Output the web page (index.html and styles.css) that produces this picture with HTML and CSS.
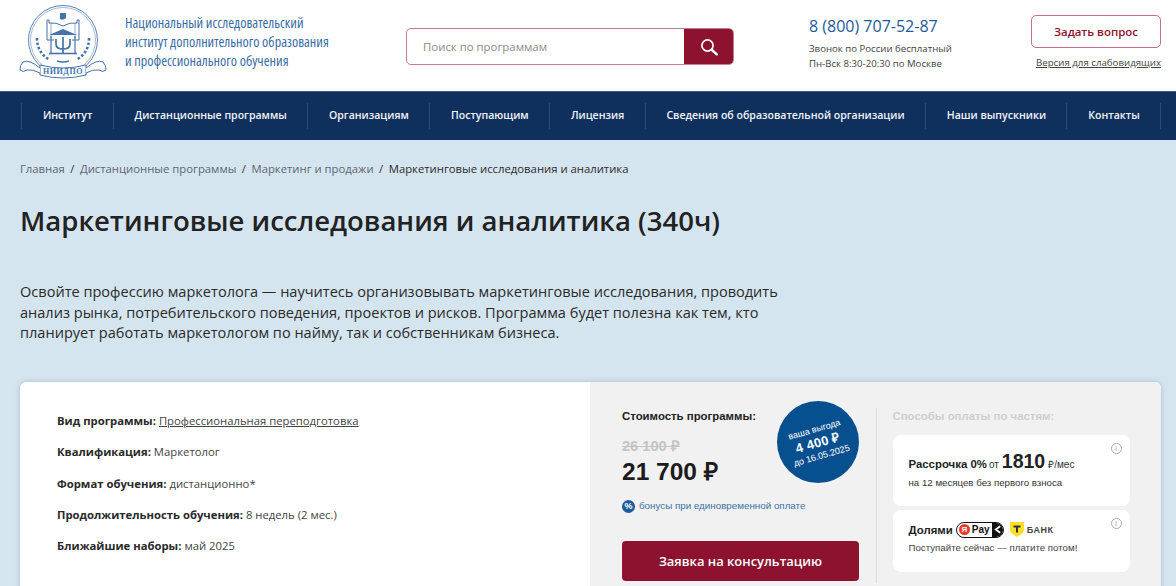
FILE: index.html
```html
<!DOCTYPE html>
<html lang="ru">
<head>
<meta charset="utf-8">
<title>Маркетинговые исследования и аналитика</title>
<link rel="stylesheet" href="styles.css">
</head>
<body>
<header class="top">
  <a class="brand">
    <svg class="logo" viewBox="0 0 88 78" width="88" height="78" fill="none" stroke="#4473ab">
      <circle cx="43" cy="34" r="34.500" stroke-width=".9"/>
      <circle cx="43" cy="34" r="32.500" stroke-width=".5"/>
      <path d="M40 7h6v5q-3 3-6 1z" fill="#4473ab" stroke="none"/>
      <path d="M43 20q-7-4-14-3v-3h-2v20h7M43 20q7-4 14-3v-3h2v20h-7" stroke-width="1"/>
      <path d="M31 17v15M55 17v15" stroke-width=".6"/>
      <path d="M29 29l14-6 14 6z" fill="#4473ab" stroke="none"/>
      <path d="M31 30v17M55 30v17" stroke-width="1.200"/>
      <path d="M36 33v5q0 5 7 5t7-5v-5M43 31v16" stroke-width="1.700"/>
      <path d="M29 47.500h28" stroke-width="1.600"/>
      <path d="M17 32q0 15 13 22M69 32q0 15-13 22" stroke-width="2.600" stroke-dasharray="2.500 2"/>
      <path d="M37 55q6 2 12 0" stroke-width="1.600"/>
      <path d="M20 59q23 6 46 0v10q-23 6-46 0z" fill="#fff" stroke-width="1"/>
      <path d="M20 62Q9 53 3 56q-3 3-3 8 3 3 7 0 6-1 13 3M66 62q11-9 17-6 3 3 3 8-3 3-7 0-6-1-13 3" fill="#fff" stroke-width="1"/>
      <text class="logo-name" x="43" y="68" text-anchor="middle">НИИДПО</text>
    </svg>
    <span class="brand-name">Национальный исследовательский<br>институт дополнительного образования<br>и профессионального обучения</span>
  </a>
  <form class="search">
    <span class="search-field">Поиск по программам</span>
    <span class="search-btn">
      <svg viewBox="0 0 18 18" width="18" height="18" fill="none" stroke="#fff" stroke-linecap="round"><circle cx="7.500" cy="7.500" r="5.600" stroke-width="1.700"/><path d="M12 12l4.800 4.400" stroke-width="2.400"/></svg>
    </span>
  </form>
  <div class="contacts">
    <div class="phone">8 (800) 707-52-87</div>
    <div class="phone-note">Звонок по России бесплатный<br>Пн-Вск 8:30-20:30 по Москве</div>
  </div>
  <div class="actions">
    <a class="ask">Задать вопрос</a>
    <a class="a11y">Версия для слабовидящих</a>
  </div>
</header>
<nav class="nav">
  <a>Институт</a><a>Дистанционные программы</a><a>Организациям</a><a>Поступающим</a><a>Лицензия</a><a>Сведения об образовательной организации</a><a>Наши выпускники</a><a class="last">Контакты</a>
</nav>
<main class="main">
  <div class="crumbs"><a>Главная</a><i>/</i><a>Дистанционные программы</a><i>/</i><a>Маркетинг и продажи</a><i>/</i><b>Маркетинговые исследования и аналитика</b></div>
  <h1>Маркетинговые исследования и аналитика (340ч)</h1>
  <p class="lead">Освойте профессию маркетолога — научитесь организовывать маркетинговые исследования, проводить анализ рынка, потребительского поведения, проектов и рисков. Программа будет полезна как тем, кто планирует работать маркетологом по найму, так и собственникам бизнеса.</p>
  <section class="card">
    <div class="facts">
      <p><b>Вид программы:</b> <u>Профессиональная переподготовка</u></p>
      <p><b>Квалификация:</b> Маркетолог</p>
      <p><b>Формат обучения:</b> дистанционно*</p>
      <p><b>Продолжительность обучения:</b> 8 недель (2 мес.)</p>
      <p><b>Ближайшие наборы:</b> май 2025</p>
    </div>
    <div class="pay">
      <div class="price">
        <div class="price-title">Стоимость программы:</div>
        <div class="price-old">26 100 ₽</div>
        <div class="price-new">21 700 ₽</div>
        <div class="bonus"><span class="pct">%</span>бонусы при единовременной оплате</div>
        <a class="cta">Заявка на консультацию</a>
        <div class="badge"><div class="badge-in"><span>ваша выгода</span><strong>4 400 ₽</strong><span>до 16.05.2025</span></div></div>
      </div>
      <div class="parts">
        <div class="parts-title">Способы оплаты по частям:</div>
        <div class="opt opt-a">
          <span class="info">i</span>
          <div class="opt-head"><b>Рассрочка 0%</b> <small>от</small> <em>1810</em> <small>₽/мес</small></div>
          <div class="opt-note">на 12 месяцев без первого взноса</div>
        </div>
        <div class="opt opt-b">
          <span class="info">i</span>
          <div class="opt-row">
            <b>Долями</b>
            <span class="ypay"><span class="ya">Я</span><span class="ypay-t">Pay</span><span class="yend"><svg viewBox="0 0 10 10" width="9" height="9" fill="none" stroke="#fff" stroke-width="2"><path d="M8 1.500L3 5l5 3.500"/></svg></span></span>
            <svg class="tshield" viewBox="0 0 14 15" width="14" height="15"><path d="M0 0h14v8q0 3-7 7-7-4-7-7z" fill="#ffdd2d"/><path d="M3.500 3.500h7v2H8v5H6v-5H3.500z" fill="#333"/></svg>
            <span class="tbank">БАНК</span>
          </div>
          <div class="opt-note2">Поступайте сейчас — платите потом!</div>
        </div>
      </div>
    </div>
  </section>
</main>
</body>
</html>
```

FILE: styles.css
```css
* { box-sizing: border-box; }
html, body { margin: 0; height: 100%; overflow: hidden; }
body { background: #d5e5f0; font-family: "Open Sans", sans-serif; color: #222; }

.top { height: 91px; background: #fff; display: flex; align-items: flex-start; padding-left: 20px; }
.brand { display: flex; width: 386px; padding-top: 6px; flex: none; }
.logo { flex: none; overflow: visible; }
.logo-name { font: bold 8px "Liberation Serif", serif; fill: #4473ab; stroke: none; letter-spacing: .6px; }
.brand-name { margin: 6.500px 0 0 17px; font-stretch: 75%; font-size: 14.200px; line-height: 19.300px; color: #3a6ca6; white-space: nowrap; }

.search { width: 328px; height: 37px; margin-top: 28px; display: flex; flex: none; border: 1px solid #c87d8f; border-radius: 5px; overflow: hidden; }
.search-field { flex: 1; padding-left: 16px; font-size: 11.400px; line-height: 35px; color: #8b8b8b; }
.search-btn { width: 50px; margin: -1px; background: #8d1230; display: flex; align-items: center; justify-content: center; }

.contacts { width: 222px; margin-left: 75px; padding-top: 15px; flex: none; }
.phone { font-size: 16px; line-height: 22px; font-weight: 500; color: #1d5a9a; }
.phone-note { margin-top: 4px; font-size: 9.650px; line-height: 15px; color: #444; }

.actions { width: 130px; margin-top: 15px; flex: none; text-align: center; }
.ask { display: block; height: 33px; border: 1px solid #c76f84; border-radius: 5px; font-size: 11.450px; font-weight: 600; line-height: 31px; color: #8d1230; }
.a11y { display: block; margin-top: 8px; font-size: 9.700px; line-height: 14px; color: #444; text-align: right; text-decoration: underline; white-space: nowrap; }

.nav { height: 49px; background: #0f2f5c; padding: 11px 0 0 21px; display: flex; align-items: flex-start; border-top: 1px solid #3a5378; }
.nav a { height: 26px; padding: 0 20.300px 0 20.900px; border-left: 1px solid #2d4a74; font-size: 10.550px; font-weight: 600; line-height: 24px; color: #f2f4f7; white-space: nowrap; }
.nav a.last { border-right: 1px solid #2d4a74; }

.main { padding: 0 15px 0 20px; }
.crumbs { padding-top: 20px; font-size: 11.300px; line-height: 17px; color: #5d6670; }
.crumbs i { font-style: normal; margin: 0 5.500px; color: #333; }
.crumbs b { font-weight: 400; color: #2b2b2b; }
h1 { margin: 25px 0 0; font-size: 27.500px; font-weight: 600; line-height: 38px; color: #222; }
.lead { width: 780px; margin: 41px 0 0; font-size: 14.550px; line-height: 20.500px; color: #2a2a2a; }

.card { height: 260px; margin-top: 39.500px; display: flex; background: #fff; border-radius: 6px; overflow: hidden; box-shadow: 0 0 5px rgba(60, 90, 120, .3); }
.facts { width: 570px; padding: 30px 0 0 37px; font-size: 11.300px; color: #444; flex: none; }
.facts p { margin: 0; height: 31.300px; line-height: 18px; }
.facts b { font-weight: 700; color: #2a2a2a; }

.pay { flex: 1; display: flex; background: #f1f1f1; padding: 26px 0 0 32px; }
.price { position: relative; width: 237px; font-family: "Liberation Sans", sans-serif; flex: none; }
.price-title { font-size: 11.400px; line-height: 16px; font-weight: 700; color: #222; }
.price-old { margin-top: 13px; font-size: 14.600px; line-height: 18px; font-weight: 700; color: #c4c4c4; text-decoration: line-through; }
.price-new { margin-top: 0; font-size: 24.500px; line-height: 34px; font-weight: 700; color: #1c1c1c; }
.bonus { margin-top: 10px; display: flex; align-items: center; gap: 4px; font-size: 9.800px; line-height: 14px; color: #3a72a6; white-space: nowrap; }
.pct { width: 13px; height: 13px; border-radius: 50%; background: #1c5c9e; color: #fff; font-size: 9px; font-weight: 700; line-height: 13px; text-align: center; flex: none; }
.cta { display: block; height: 40px; margin-top: 28px; border-radius: 4px; background: #8d1230; color: #fff; font: 600 12.950px/40px "Open Sans", sans-serif; text-align: center; }
.badge { position: absolute; left: 155px; top: -7px; width: 82px; height: 82px; border-radius: 50%; background: #07508f; color: #fff; display: flex; align-items: center; justify-content: center; }
.badge-in { transform: rotate(-16deg); display: flex; flex-direction: column; align-items: center; font-size: 9px; line-height: 12px; white-space: nowrap; }
.badge-in strong { font-size: 13px; line-height: 15px; font-weight: 700; letter-spacing: .3px; }

.parts { width: 286px; margin-left: 16.500px; padding-left: 16px; border-left: 1px solid #dcdcdc; height: 175px; font-family: "Liberation Sans", sans-serif; flex: none; }
.parts-title { font-size: 11.400px; line-height: 16px; font-weight: 700; color: #cfcfcf; margin-bottom: 11px; }
.opt { position: relative; width: 237px; background: #fff; border-radius: 8px; padding-left: 16px; }
.opt-a { height: 71px; padding-top: 14px; margin-bottom: 4px; }
.opt-b { height: 62px; padding-top: 11px; }
.info { position: absolute; right: 8px; top: 8px; width: 11px; height: 11px; border: 1px solid #aaa; border-radius: 50%; font-size: 7px; line-height: 9px; text-align: center; color: #999; }
.opt-head { display: flex; align-items: baseline; gap: 2px; white-space: nowrap; color: #222; }
.opt-head b { font-size: 11.400px; }
.opt-head small { font-size: 10px; color: #333; }
.opt-head em { font-style: normal; font-weight: 700; font-size: 19.500px; line-height: 24px; margin: 0 1px; }
.opt-note { margin-top: 3px; font-size: 9.700px; line-height: 13px; color: #333; }
.opt-row { display: flex; align-items: center; gap: 3px; height: 17px; }
.opt-row b { font-size: 11.400px; color: #222; }
.ypay { width: 48px; height: 16px; border: 1px solid #111; border-radius: 8px; display: flex; align-items: center; background: #fff; overflow: hidden; font-size: 10px; font-weight: 700; }
.ya { width: 11px; height: 11px; margin-left: 2px; border-radius: 50%; background: #f0392b; color: #fff; font-size: 8px; line-height: 11px; text-align: center; flex: none; }
.ypay-t { margin-left: 2px; color: #111; }
.yend { flex: 1; height: 100%; margin-left: 2px; background: #111; display: flex; align-items: center; justify-content: center; }
.tshield { margin-left: 3px; flex: none; }
.tbank { margin-left: 0; font-size: 9px; font-weight: 700; letter-spacing: .5px; color: #444; }
.opt-note2 { margin-top: 3px; font-size: 9.700px; line-height: 13px; color: #444; }
```
